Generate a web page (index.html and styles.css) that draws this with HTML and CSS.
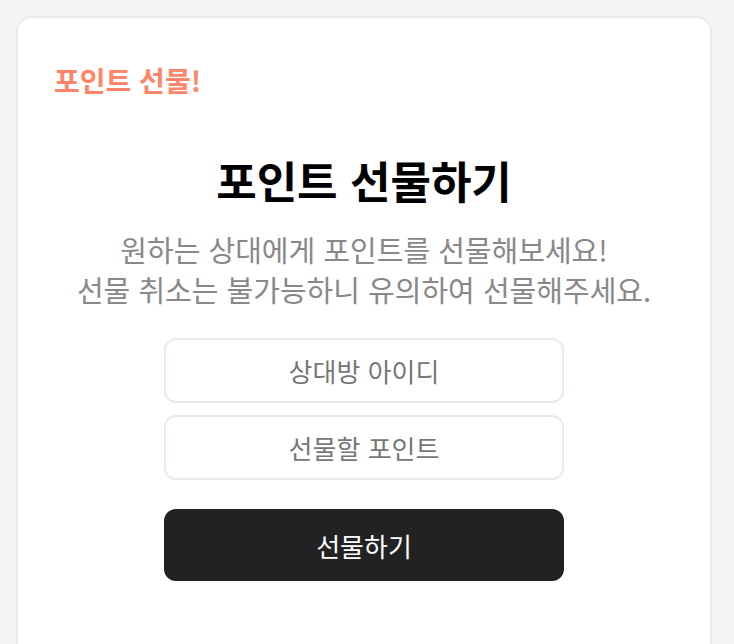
FILE: index.html
```html
<!DOCTYPE html>
<html lang="ko">
<head>
  <meta charset="UTF-8">
  <meta name="viewport" content="width=device-width, initial-scale=1.0">
  <title>포인트 선물</title>
  <link rel="stylesheet" href="styles.css">
</head>
<body>
  <div class="card">
    <p class="card-label">포인트 선물!</p>

    <div class="gift">
      <h2>포인트 선물하기</h2>
      <p class="gift-desc">원하는 상대에게 포인트를 선물해보세요!<br>선물 취소는 불가능하니 유의하여 선물해주세요.</p>

      <form class="gift-form">
        <input type="text" placeholder="상대방 아이디">
        <input type="text" placeholder="선물할 포인트">
        <button type="button" class="gift-btn">선물하기</button>
      </form>
    </div>
  </div>
</body>
</html>
```

FILE: styles.css
```css
body {
  font-family: "Noto Sans CJK KR", "Noto Sans", sans-serif;
  margin: 0;
  padding: 16px 22px 0 16px;
  background-color: #f5f5f5;
  color: #111;
  height: 644px;
  box-sizing: border-box;
  overflow: hidden;
}
.card {
  background: #fff;
  border: 2px solid #e6ebec;
  border-bottom: none;
  border-radius: 16px 16px 0 0;
  padding: 42px 36px 0;
  height: 628px;
  box-sizing: border-box;
}
.card-label {
  margin: 0;
  font-size: 28px;
  line-height: 40px;
  font-weight: 700;
  color: #ff8469;
}
.gift {
  text-align: center;
  margin-top: 50px;
}
.gift h2 {
  margin: 0;
  font-size: 44px;
  line-height: 60px;
  font-weight: 700;
  color: #000;
}
.gift-desc {
  margin: 19px 0 0;
  font-size: 29px;
  line-height: 40px;
  color: #888;
}
.gift-form {
  width: 400px;
  margin: 29px auto 0;
  display: flex;
  flex-direction: column;
  gap: 12px;
}
.gift-form input {
  height: 65px;
  border: 2px solid #e6ebec;
  border-radius: 12px;
  font-family: inherit;
  font-size: 26px;
  text-align: center;
  color: #333;
  box-sizing: border-box;
  outline: none;
}
.gift-form input::placeholder {
  color: #777;
}
.gift-btn {
  margin-top: 17px;
  height: 72px;
  border: none;
  border-radius: 12px;
  background: #222;
  color: #fff;
  font-family: inherit;
  font-size: 26px;
  cursor: pointer;
}
```
